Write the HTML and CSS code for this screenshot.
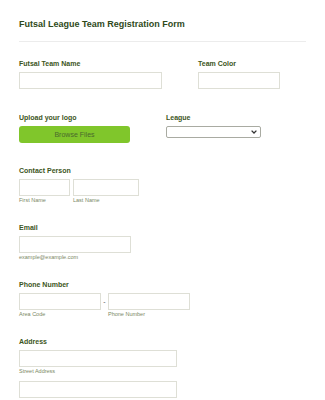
FILE: index.html
```html
<!DOCTYPE html>
<html lang="en">

<head>
    <meta charset="UTF-8">
    <meta name="viewport" content="width=device-width, initial-scale=1.0">
    <title>Futsal League Team Registration Form</title>
    <link rel="stylesheet" href="styles.css">
</head>

<body>

    <form class="form">
        <div class="form-header">
            <h1 class="form-title">Futsal League Team Registration Form</h1>
        </div>

        <div class="row row-first">
            <div class="field field-team">
                <label class="label">Futsal Team Name</label>
                <input type="text" class="input input-team">
            </div>
            <div class="field">
                <label class="label">Team Color</label>
                <input type="text" class="input input-color">
            </div>
        </div>

        <div class="row row-upload">
            <div class="field field-upload">
                <label class="label">Upload your logo</label>
                <button type="button" class="browse-btn">Browse Files</button>
            </div>
            <div class="field">
                <label class="label">League</label>
                <div class="select">
                    <svg class="chevron" width="6" height="4" viewBox="0 0 6 4">
                        <path d="M0.6 0.6 L3 3 L5.4 0.6" fill="none" stroke="#333" stroke-width="1.3"/>
                    </svg>
                </div>
            </div>
        </div>

        <div class="row row-contact">
            <div class="field">
                <label class="label">Contact Person</label>
                <div class="inline-group">
                    <div class="sub-field">
                        <input type="text" class="input input-first">
                        <span class="sublabel">First Name</span>
                    </div>
                    <div class="sub-field">
                        <input type="text" class="input input-last">
                        <span class="sublabel">Last Name</span>
                    </div>
                </div>
            </div>
        </div>

        <div class="row">
            <div class="field">
                <label class="label">Email</label>
                <input type="email" class="input input-email">
                <span class="sublabel">example@example.com</span>
            </div>
        </div>

        <div class="row">
            <div class="field">
                <label class="label">Phone Number</label>
                <div class="inline-group phone-group">
                    <div class="sub-field">
                        <input type="text" class="input input-area">
                        <span class="sublabel">Area Code</span>
                    </div>
                    <span class="dash">-</span>
                    <div class="sub-field">
                        <input type="text" class="input input-phone">
                        <span class="sublabel">Phone Number</span>
                    </div>
                </div>
            </div>
        </div>

        <div class="row">
            <div class="field">
                <label class="label">Address</label>
                <input type="text" class="input input-address">
                <span class="sublabel">Street Address</span>
                <input type="text" class="input input-address input-address2">
            </div>
        </div>
    </form>

</body>

</html>
```

FILE: styles.css
```css
* {
    margin: 0;
    padding: 0;
    box-sizing: border-box;
}

body {
    font-family: "Liberation Sans", Arial, sans-serif;
    background-color: #ffffff;
    width: 325px;
    height: 400px;
    overflow: hidden;
}

.form {
    padding: 0 19px;
}

.form-header {
    padding: 19px 0 11px;
    border-bottom: 1px solid #ececec;
}

.form-title {
    font-size: 9px;
    line-height: 11px;
    font-weight: bold;
    color: #2f4a1a;
}

.row {
    display: flex;
    margin-top: 19px;
}

.row-first {
    margin-top: 17px;
}

.row-upload {
    margin-top: 24px;
}

.row-contact {
    margin-top: 23px;
}

.field {
    display: flex;
    flex-direction: column;
    align-items: flex-start;
}

.field-team {
    width: 179px;
}

.field-upload {
    width: 147px;
}

.label {
    font-size: 7px;
    line-height: 9px;
    font-weight: bold;
    color: #3c5522;
    margin-bottom: 4px;
}

.input {
    display: block;
    height: 17px;
    border: 1px solid #dedfd6;
    background-color: #fff;
    outline: none;
}

.input-team { width: 143px; }
.input-color { width: 82px; }
.input-first { width: 51px; }
.input-last { width: 66px; }
.input-email { width: 112px; }
.input-area { width: 82px; }
.input-phone { width: 82px; }
.input-address { width: 158px; }

.input-address2 {
    margin-top: 6px;
}

.browse-btn {
    width: 111px;
    height: 17px;
    border: none;
    border-radius: 3px;
    background-color: #80c62b;
    color: #4a6a2c;
    font-family: "Liberation Sans", Arial, sans-serif;
    font-size: 7px;
    cursor: pointer;
}

.select {
    width: 95px;
    height: 12px;
    border: 1px solid #a9aba2;
    border-radius: 2px;
    background-color: #fff;
    display: flex;
    align-items: center;
    justify-content: flex-end;
    padding-right: 3px;
}

.inline-group {
    display: flex;
    gap: 3px;
}

.phone-group {
    gap: 0;
}

.sub-field {
    display: flex;
    flex-direction: column;
}

.sublabel {
    font-size: 5.5px;
    line-height: 7px;
    color: #7b8965;
    margin-top: 1px;
}

.dash {
    width: 7px;
    height: 17px;
    line-height: 17px;
    text-align: center;
    font-size: 7px;
    color: #555;
}
```
